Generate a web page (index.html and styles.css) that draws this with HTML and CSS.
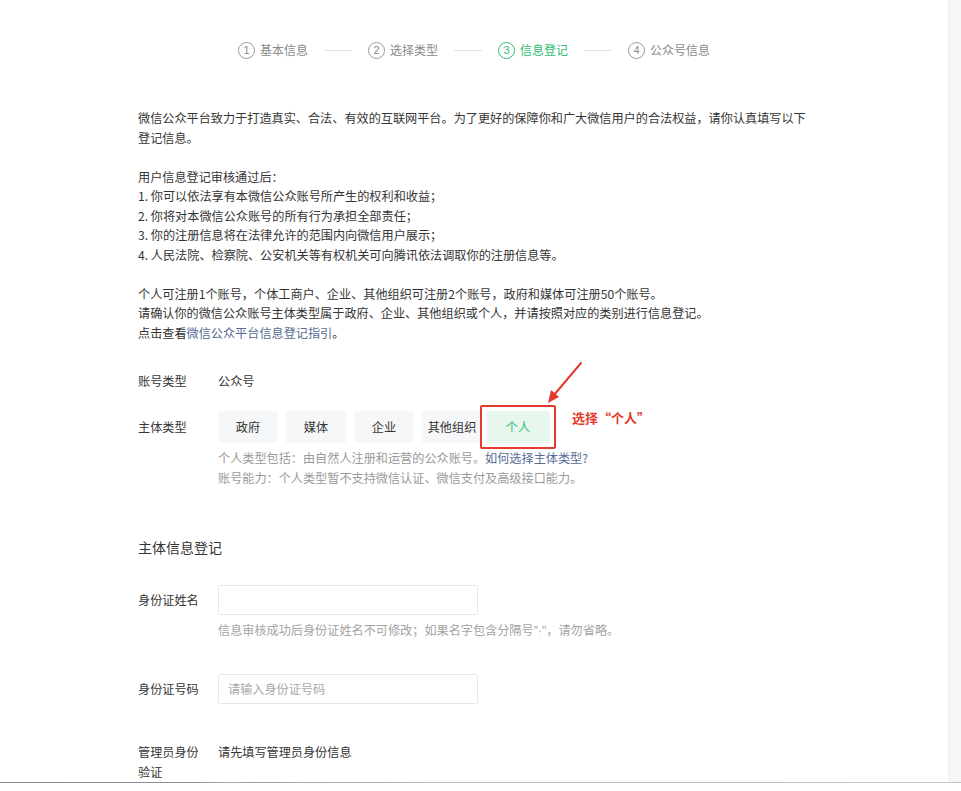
FILE: index.html
```html
<!DOCTYPE html>
<html lang="zh-CN">
<head>
<meta charset="utf-8">
<title>信息登记</title>
<link rel="stylesheet" href="styles.css">
</head>
<body>
<div class="page">
  <div class="main">
    <div class="steps">
      <div class="step"><span class="num">1</span><span class="step-text">基本信息</span></div>
      <span class="step-line"></span>
      <div class="step"><span class="num">2</span><span class="step-text">选择类型</span></div>
      <span class="step-line"></span>
      <div class="step active"><span class="num">3</span><span class="step-text">信息登记</span></div>
      <span class="step-line"></span>
      <div class="step"><span class="num">4</span><span class="step-text">公众号信息</span></div>
    </div>

    <div class="content">
      <div class="intro">
        <p>微信公众平台致力于打造真实、合法、有效的互联网平台。为了更好的保障你和广大微信用户的合法权益，请你认真填写以下登记信息。</p>
        <p>用户信息登记审核通过后：<br>1. 你可以依法享有本微信公众账号所产生的权利和收益；<br>2. 你将对本微信公众账号的所有行为承担全部责任；<br>3. 你的注册信息将在法律允许的范围内向微信用户展示；<br>4. 人民法院、检察院、公安机关等有权机关可向腾讯依法调取你的注册信息等。</p>
        <p>个人可注册1个账号，个体工商户、企业、其他组织可注册2个账号，政府和媒体可注册50个账号。<br>请确认你的微信公众账号主体类型属于政府、企业、其他组织或个人，并请按照对应的类别进行信息登记。<br>点击查看<a class="link" href="#">微信公众平台信息登记指引</a>。</p>
      </div>

      <div class="form-row row-type">
        <div class="label">账号类型</div>
        <div class="value">公众号</div>
      </div>

      <div class="form-row row-subject">
        <div class="label label-tall">主体类型</div>
        <div class="control">
          <div class="options">
            <span class="opt">政府</span>
            <span class="opt">媒体</span>
            <span class="opt">企业</span>
            <span class="opt">其他组织</span>
            <span class="opt selected">个人
              <svg class="arrow" width="44" height="50" viewBox="0 0 44 50" aria-hidden="true">
                <line x1="36" y1="4" x2="9" y2="36" stroke="#e23a2e" stroke-width="2" stroke-linecap="round"/>
                <polygon points="3,44 6,31 14,38" fill="#e23a2e"/>
              </svg>
              <span class="note">选择“个人”</span>
            </span>
          </div>
          <div class="desc">个人类型包括：由自然人注册和运营的公众账号。<a class="link" href="#">如何选择主体类型?</a><br>账号能力：个人类型暂不支持微信认证、微信支付及高级接口能力。</div>
        </div>
      </div>

      <h3 class="section-title">主体信息登记</h3>

      <div class="form-row row-name">
        <div class="label label-input">身份证姓名</div>
        <div class="control">
          <div class="input"></div>
          <div class="hint">信息审核成功后身份证姓名不可修改；如果名字包含分隔号<span class="latin">"·"</span>，请勿省略。</div>
        </div>
      </div>

      <div class="form-row row-id">
        <div class="label label-input">身份证号码</div>
        <div class="control">
          <div class="input"><span class="placeholder">请输入身份证号码</span></div>
        </div>
      </div>

      <div class="form-row row-admin">
        <div class="label">管理员身份验证</div>
        <div class="value">请先填写管理员身份信息</div>
      </div>
    </div>
  </div>
  <div class="sidebar"></div>
</div>
</body>
</html>
```

FILE: styles.css
```css
html, body {
  margin: 0;
  padding: 0;
  background: #ffffff;
}

body {
  font-family: "Noto Sans CJK SC", "Noto Sans", "Liberation Sans", sans-serif;
  font-size: 12px;
  color: #353535;
}

.page {
  display: flex;
  height: 782px;
  overflow: hidden;
  border-bottom: 1px solid transparent;
  background-image: linear-gradient(to right, #7e8894 0, #8d96a0 200px, #a9adb2 230px, #9aa1a9 250px, #b9bbbe 420px, #c4c4c4 961px);
  background-size: 100% 1px;
  background-repeat: no-repeat;
  background-position: left bottom;
  background-origin: border-box;
  margin-bottom: 9px;
}

.main {
  flex: 1;
  min-width: 0;
  background: #fff;
  height: 782px;
}

.sidebar {
  width: 13px;
  height: 782px;
  background: #f5f6f7;
  border-left: 1px solid #f0f1f2;
  box-sizing: border-box;
}

/* steps */
.steps {
  display: flex;
  justify-content: center;
  align-items: center;
  gap: 16px;
  padding-top: 40px;
  height: 20px;
  color: #8a8a8a;
}

.step {
  display: flex;
  align-items: center;
  gap: 5px;
  font-size: 12px;
  line-height: 20px;
}

.num {
  width: 15px;
  height: 15px;
  border: 1px solid #9a9a9a;
  border-radius: 50%;
  display: flex;
  align-items: center;
  justify-content: center;
  font-size: 11px;
  line-height: 1;
  color: #8a8a8a;
  font-family: "Liberation Sans", "Noto Sans", sans-serif;
}

.step.active,
.step.active .num {
  color: #2fbd77;
  border-color: #2fbd77;
}

.step-line {
  width: 28px;
  height: 1px;
  background: #e2e2e2;
}

/* content */
.content {
  margin-left: 138px;
  width: 674px;
  font-size: 12.15px;
}

.intro {
  margin-top: 48px;
  line-height: 19.5px;
}

.intro p {
  margin: 0 0 19.5px;
}

.intro p:last-child {
  margin-bottom: 0;
}

.link {
  color: #576b95;
  text-decoration: none;
}

.form-row {
  display: grid;
  grid-template-columns: 64px 1fr;
  column-gap: 16px;
  line-height: 20px;
}

.label {
  color: #353535;
}

.label-tall {
  line-height: 32px;
}

.label-input {
  line-height: 30px;
}

.row-type {
  margin-top: 29px;
}

.row-subject {
  margin-top: 20px;
}

.options {
  display: flex;
  gap: 8px;
}

.opt {
  position: relative;
  width: 60px;
  height: 32px;
  line-height: 32px;
  text-align: center;
  background: #f6f7f8;
  border-radius: 2px;
  color: #353535;
}

.opt.selected {
  background: #e8f7ee;
  color: #2fbd77;
  margin-left: -4px;
  width: 64px;
}

.opt.selected::after {
  content: "";
  position: absolute;
  left: -6px;
  top: -6px;
  right: -6px;
  bottom: -6px;
  border: 2px solid #e23a2e;
  border-radius: 2px;
}

.arrow {
  position: absolute;
  left: 59px;
  top: -52px;
}

.note {
  position: absolute;
  left: 86px;
  top: -3px;
  white-space: nowrap;
  color: #e23a2e;
  font-weight: bold;
  font-size: 13px;
  line-height: 20px;
}

.desc {
  margin-top: 5px;
  color: #9a9a9a;
  line-height: 19.5px;
}

.section-title {
  margin: 50px 0 0;
  font-size: 14px;
  font-weight: normal;
  line-height: 20px;
  color: #353535;
}

.row-name {
  margin-top: 28px;
}

.input {
  width: 260px;
  height: 30px;
  border: 1px solid #e7e7eb;
  box-sizing: border-box;
  border-radius: 2px;
  background: #fff;
  padding: 0 9px;
  line-height: 28px;
}

.placeholder {
  color: #a8a8a8;
}

.hint {
  margin-top: 5px;
  color: #a3a3a3;
  line-height: 20px;
}

.latin {
  font-family: "Liberation Sans", sans-serif;
}

.row-id {
  margin-top: 33px;
}

.row-admin {
  margin-top: 38px;
}
```
